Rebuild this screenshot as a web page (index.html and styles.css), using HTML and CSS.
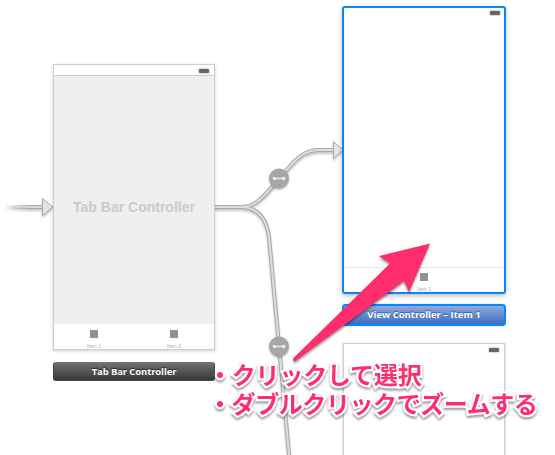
FILE: index.html
```html
<!DOCTYPE html>
<html lang="ja">
<head>
<meta charset="utf-8">
<title>Storyboard</title>
<link rel="stylesheet" href="styles.css">
</head>
<body>
<main class="canvas">
  <svg class="wires" width="555" height="455" viewBox="0 0 555 455">
    <defs>
      <linearGradient id="fade" x1="5" x2="30" y1="0" y2="0" gradientUnits="userSpaceOnUse">
        <stop offset="0" stop-color="#aaa" stop-opacity="0"/><stop offset="1" stop-color="#aaa"/>
      </linearGradient>
      <linearGradient id="fade-inner" x1="5" x2="30" y1="0" y2="0" gradientUnits="userSpaceOnUse">
        <stop offset="0" stop-color="#ddd" stop-opacity="0"/><stop offset="1" stop-color="#d8d8d8"/>
      </linearGradient>
    </defs>
    <g class="shaded">
      <rect x="5" y="205" width="38" height="4" fill="url(#fade)"/>
      <rect x="5" y="206" width="38" height="2" fill="url(#fade-inner)"/>
      <path class="head" d="M42.5 198.5V215.5L53 207Z"/>
      <g class="outer">
        <path d="M214 207H242C258 207 266 193 291 165Q304 150 318 150H334"/>
        <path d="M214 207H240C260 207 267 222 269 237L290 465"/>
      </g>
      <g class="inner">
        <path d="M214 207H242C258 207 266 193 291 165Q304 150 318 150H334"/>
        <path d="M214 207H240C260 207 267 222 269 237L290 465"/>
      </g>
      <path class="head" d="M333.500 141.500V158.500L343 150Z"/>
    </g>
    <g class="segue" transform="translate(279 178.500)">
      <circle r="10"/><path d="M-4 0H4"/><circle class="dot" cx="-4.500" r="1.800"/><circle class="dot" cx="4.500" r="1.800"/>
    </g>
    <g class="segue" transform="translate(279 346.500)">
      <circle r="10"/><path d="M-4 0H4"/><circle class="dot" cx="-4.500" r="1.800"/><circle class="dot" cx="4.500" r="1.800"/>
    </g>
  </svg>

  <section class="node tab-controller">
    <div class="screen">
      <div class="status"><i class="battery"></i></div>
      <div class="content">Tab Bar Controller</div>
      <div class="tabs">
        <div class="tab"><i class="icon"></i><span>Item 1</span></div>
        <div class="tab"><i class="icon"></i><span>Item 2</span></div>
      </div>
    </div>
    <div class="caption">Tab Bar Controller</div>
  </section>

  <section class="node first-view">
    <div class="screen">
      <div class="status"><i class="battery"></i></div>
      <div class="content"></div>
      <div class="tabs"><div class="tab"><i class="icon"></i><span>Item 1</span></div></div>
    </div>
    <div class="caption">View Controller – Item 1</div>
  </section>

  <section class="node second-view">
    <div class="screen"><div class="status"><i class="battery"></i></div></div>
  </section>

  <svg class="pointer" width="555" height="455" viewBox="0 0 555 455">
    <path d="M430 243.500L379 256L390 263.500L293.500 358Q292 361.500 295.500 361L404 281L409 292Z"/>
  </svg>
  <div class="note"><p>・クリックして選択</p><p class="long">・ダブルクリックでズームする</p></div>
</main>
</body>
</html>
```

FILE: styles.css
```css
* { box-sizing: border-box; }
body { margin: 0; background: #fff; }
.canvas {
  position: relative;
  width: 555px;
  height: 455px;
  overflow: hidden;
  font-family: "Open Sans", "Liberation Sans", sans-serif;
}
.wires, .pointer { position: absolute; top: 0; left: 0; }
.shaded { filter: drop-shadow(0 2px 1px rgba(0, 0, 0, .22)); }
.outer path { fill: none; stroke: #a8a8a8; stroke-width: 4; }
.inner path { fill: none; stroke: #dedede; stroke-width: 2; }
.head { fill: #e4e4e4; stroke: #aaa; }
.segue { fill: #a6a6a6; filter: drop-shadow(0 1px 1px rgba(0, 0, 0, .3)); }
.segue path { stroke: #eee; stroke-width: 1.3; }
.segue .dot { fill: #eee; }

.node { position: absolute; display: flex; flex-direction: column; }
.screen {
  display: flex;
  flex-direction: column;
  background: #fff;
  border: 1px solid #cecece;
  box-shadow: 0 1px 3px rgba(0, 0, 0, .2);
}
.status { display: flex; justify-content: flex-end; height: 10px; padding: 3px 5px 0 0; }
.battery {
  width: 10px;
  height: 4px;
  background: #666;
  border-radius: 1px;
  box-shadow: 0 0 2px #777;
}
.content { flex: 1; }
.tabs { display: flex; height: 26px; }
.tab { flex: 1; display: flex; flex-direction: column; align-items: center; padding-top: 6px; }
.icon { width: 8px; height: 8px; background: #929292; }
.tab span {
  margin-top: 5px;
  font: 5px/6px "Liberation Sans", sans-serif;
  color: #aaa;
}
.caption {
  font-weight: 700;
  font-size: 9.5px;
  text-align: center;
  color: #fff;
  white-space: nowrap;
}

.tab-controller { left: 53px; top: 64px; width: 162px; gap: 12px; }
.tab-controller .screen { height: 286px; }
.tab-controller .status { height: 11px; padding-top: 4px; border-bottom: 1px solid #ccc; }
.tab-controller .content {
  display: flex;
  align-items: center;
  justify-content: center;
  padding-top: 14px;
  background: #efefef;
  color: #c9cbcc;
  font: 700 14px/16px "Liberation Sans", sans-serif;
}
.tab-controller .tabs { height: 25px; }
.tab-controller .caption {
  height: 19px;
  line-height: 17px;
  letter-spacing: -.12px;
  border: 1px solid #444;
  border-top-color: #777;
  border-radius: 3px;
  background: linear-gradient(#707070, #383838);
  text-shadow: 0 -1px 1px #222;
}

.first-view { left: 342px; top: 6px; width: 164px; gap: 10px; }
.first-view .screen {
  height: 288px;
  border: 2px solid #0a84ff;
  border-radius: 3px;
  box-shadow: 0 2px 4px rgba(0, 0, 0, .25);
}
.first-view .tabs { height: 25px; border-top: 1px solid #e6e6e6; }
.first-view .tab { padding-top: 5px; }
.first-view .status { padding-right: 4px; }
.first-view .caption {
  height: 22px;
  line-height: 17px;
  border: 2px solid #0a84ff;
  border-radius: 4px;
  background: linear-gradient(#8eabdc, #3f6ec3);
  text-shadow: 0 -1px 1px #345694;
  box-shadow: 0 0 1px #0a84ff;
}

.second-view { left: 343px; top: 343px; width: 162px; }
.second-view .screen { height: 286px; }
.second-view .status { height: 11px; padding-top: 4px; }

.pointer { fill: #ff2d6e; filter: drop-shadow(0 2px 1px rgba(0, 0, 0, .4)); }
.note {
  position: absolute;
  left: 208px;
  top: 359px;
  font: 700 24px/29px "Noto Sans CJK JP", sans-serif;
  letter-spacing: -.2px;
  color: #ff2d6e;
  white-space: nowrap;
  -webkit-text-stroke: 4.5px #fff;
  paint-order: stroke fill;
  stroke-linejoin: round;
  filter: drop-shadow(0 2px 1px rgba(0, 0, 0, .4));
}
.note p { margin: 0; }
.note .long { letter-spacing: -.42px; }
```
